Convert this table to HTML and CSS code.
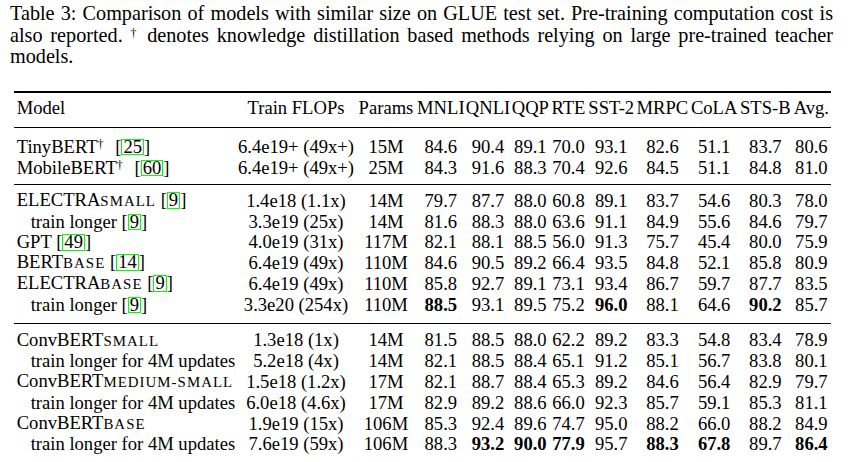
FILE: index.html
```html
<!DOCTYPE html>
<html lang="en">
<head>
<meta charset="utf-8">
<title>Table 3</title>
<link rel="stylesheet" href="styles.css">
</head>
<body>
<div class="page">
  <p class="caption">Table 3: Comparison of models with similar size on GLUE test set. Pre-training computation cost is also reported. <sup class="dag">†</sup> denotes knowledge distillation based methods relying on large pre-trained teacher models.</p>
  <table class="results">
    <colgroup>
      <col class="c-model"><col class="c-flops"><col class="c-params">
      <col class="c-mnli"><col class="c-qnli"><col class="c-qqp"><col class="c-rte">
      <col class="c-sst"><col class="c-mrpc"><col class="c-cola"><col class="c-stsb"><col class="c-avg">
    </colgroup>
    <thead>
      <tr>
        <th class="name">Model</th><th>Train FLOPs</th><th>Params</th><th>MNLI</th><th>QNLI</th><th>QQP</th><th>RTE</th><th>SST-2</th><th>MRPC</th><th>CoLA</th><th>STS-B</th><th>Avg.</th>
      </tr>
    </thead>
    <tbody class="g1">
      <tr>
        <td class="name">TinyBERT<sup class="dag">†</sup> <span class="ref wide">[<span class="cbox">25</span>]</span></td><td>6.4e19+ (49x+)</td><td>15M</td><td>84.6</td><td>90.4</td><td>89.1</td><td>70.0</td><td>93.1</td><td>82.6</td><td>51.1</td><td>83.7</td><td>80.6</td>
      </tr>
      <tr>
        <td class="name">MobileBERT<sup class="dag">†</sup> <span class="ref wide">[<span class="cbox">60</span>]</span></td><td>6.4e19+ (49x+)</td><td>25M</td><td>84.3</td><td>91.6</td><td>88.3</td><td>70.4</td><td>92.6</td><td>84.5</td><td>51.1</td><td>84.8</td><td>81.0</td>
      </tr>
    </tbody>
    <tbody class="g2">
      <tr>
        <td class="name">ELECTRA<span class="sc">small</span> <span class="ref">[<span class="cbox">9</span>]</span></td><td>1.4e18 (1.1x)</td><td>14M</td><td>79.7</td><td>87.7</td><td>88.0</td><td>60.8</td><td>89.1</td><td>83.7</td><td>54.6</td><td>80.3</td><td>78.0</td>
      </tr>
      <tr>
        <td class="name sub">train longer <span class="ref">[<span class="cbox">9</span>]</span></td><td>3.3e19 (25x)</td><td>14M</td><td>81.6</td><td>88.3</td><td>88.0</td><td>63.6</td><td>91.1</td><td>84.9</td><td>55.6</td><td>84.6</td><td>79.7</td>
      </tr>
      <tr>
        <td class="name">GPT <span class="ref">[<span class="cbox">49</span>]</span></td><td>4.0e19 (31x)</td><td>117M</td><td>82.1</td><td>88.1</td><td>88.5</td><td>56.0</td><td>91.3</td><td>75.7</td><td>45.4</td><td>80.0</td><td>75.9</td>
      </tr>
      <tr>
        <td class="name">BERT<span class="sc">base</span> <span class="ref">[<span class="cbox">14</span>]</span></td><td>6.4e19 (49x)</td><td>110M</td><td>84.6</td><td>90.5</td><td>89.2</td><td>66.4</td><td>93.5</td><td>84.8</td><td>52.1</td><td>85.8</td><td>80.9</td>
      </tr>
      <tr>
        <td class="name">ELECTRA<span class="sc">base</span> <span class="ref">[<span class="cbox">9</span>]</span></td><td>6.4e19 (49x)</td><td>110M</td><td>85.8</td><td>92.7</td><td>89.1</td><td>73.1</td><td>93.4</td><td>86.7</td><td>59.7</td><td>87.7</td><td>83.5</td>
      </tr>
      <tr>
        <td class="name sub">train longer <span class="ref">[<span class="cbox">9</span>]</span></td><td>3.3e20 (254x)</td><td>110M</td><td class="b">88.5</td><td>93.1</td><td>89.5</td><td>75.2</td><td class="b">96.0</td><td>88.1</td><td>64.6</td><td class="b">90.2</td><td>85.7</td>
      </tr>
    </tbody>
    <tbody class="g3">
      <tr>
        <td class="name">ConvBERT<span class="sc">small</span></td><td>1.3e18 (1x)</td><td>14M</td><td>81.5</td><td>88.5</td><td>88.0</td><td>62.2</td><td>89.2</td><td>83.3</td><td>54.8</td><td>83.4</td><td>78.9</td>
      </tr>
      <tr>
        <td class="name sub">train longer for 4M updates</td><td>5.2e18 (4x)</td><td>14M</td><td>82.1</td><td>88.5</td><td>88.4</td><td>65.1</td><td>91.2</td><td>85.1</td><td>56.7</td><td>83.8</td><td>80.1</td>
      </tr>
      <tr>
        <td class="name">ConvBERT<span class="sc">medium-small</span></td><td>1.5e18 (1.2x)</td><td>17M</td><td>82.1</td><td>88.7</td><td>88.4</td><td>65.3</td><td>89.2</td><td>84.6</td><td>56.4</td><td>82.9</td><td>79.7</td>
      </tr>
      <tr>
        <td class="name sub">train longer for 4M updates</td><td>6.0e18 (4.6x)</td><td>17M</td><td>82.9</td><td>89.2</td><td>88.6</td><td>66.0</td><td>92.3</td><td>85.7</td><td>59.1</td><td>85.3</td><td>81.1</td>
      </tr>
      <tr>
        <td class="name">ConvBERT<span class="sc">base</span></td><td>1.9e19 (15x)</td><td>106M</td><td>85.3</td><td>92.4</td><td>89.6</td><td>74.7</td><td>95.0</td><td>88.2</td><td>66.0</td><td>88.2</td><td>84.9</td>
      </tr>
      <tr>
        <td class="name sub">train longer for 4M updates</td><td>7.6e19 (59x)</td><td>106M</td><td>88.3</td><td class="b">93.2</td><td class="b">90.0</td><td class="b">77.9</td><td>95.7</td><td class="b">88.3</td><td class="b">67.8</td><td>89.7</td><td class="b">86.4</td>
      </tr>
    </tbody>
  </table>
</div>
</body>
</html>
```

FILE: styles.css
```css
html, body {
  margin: 0;
  background: #ffffff;
}

body {
  color: #000000;
  font-family: "Liberation Serif", Tinos, "Times New Roman", "DejaVu Serif", serif;
}

.page {
  padding-top: 3px;
}

.caption {
  margin: 0 0 0 10px;
  width: 823px;
  font-family: "Liberation Serif", Tinos, "DejaVu Serif", serif;
  font-size: 20.2px;
  line-height: 21.5px;
  text-align: justify;
}

.dag {
  font-size: 12px;
  line-height: 0;
  vertical-align: 5px;
}

.results {
  margin: 23.5px 0 0 14px;
  width: 817px;
  table-layout: fixed;
  border-collapse: separate;
  border-spacing: 0;
  font-family: "Liberation Serif", Tinos, "DejaVu Serif", serif;
  font-size: 18.6px;
  line-height: 20.3px;
}

.c-model { width: 222.4px; }
.c-flops { width: 119.2px; }
.c-params { width: 60.8px; }
.c-mnli { width: 48.9px; }
.c-qnli { width: 45.5px; }
.c-qqp { width: 39.2px; }
.c-rte { width: 37px; }
.c-sst { width: 48.5px; }
.c-mrpc { width: 53.9px; }
.c-cola { width: 49.6px; }
.c-stsb { width: 52.8px; }
.c-avg { width: 39.2px; }

.results th,
.results td {
  padding: 0;
  text-align: center;
  white-space: nowrap;
  font-weight: normal;
  overflow: visible;
}

.results .name {
  text-align: left;
  padding-left: 2.7px;
}

.results .sub {
  padding-left: 16.7px;
}

.results thead th {
  border-top: 2px solid #000;
  border-bottom: 1px solid #000;
  padding-top: 4.6px;
  padding-bottom: 9.6px;
}

.results tbody tr:last-child td {
  border-bottom: 1px solid #000;
}

.results .g1 td {
  line-height: 21px;
}
.results .g1 tr:first-child td { padding-top: 7.2px; }
.results .g1 tr:last-child td { padding-bottom: 6.3px; }

.results .g2 tr:first-child td { padding-top: 5.3px; }
.results .g2 tr:last-child td { padding-bottom: 8.1px; }

.results .g3 tr:first-child td { padding-top: 5.7px; }
.results .g3 tr:last-child td {
  padding-bottom: 7px;
  border-bottom: 2px solid #000;
}

.results .b {
  font-weight: bold;
}

.sc {
  font-size: 0.8em;
  text-transform: uppercase;
  letter-spacing: 0.07em;
}

.ref.wide {
  margin-left: 7px;
}

.cbox {
  display: inline-block;
  height: 14.7px;
  line-height: 14px;
  padding: 0 1px;
  border: 1px solid #00ff00;
}
```
